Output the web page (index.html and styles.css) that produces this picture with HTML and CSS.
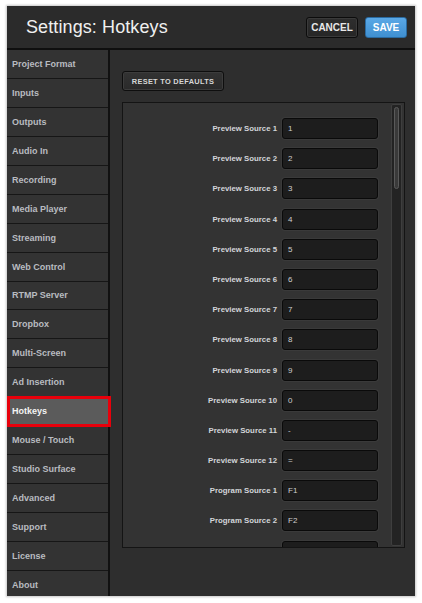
FILE: index.html
```html
<!DOCTYPE html>
<html>
<head>
<meta charset="utf-8">
<link rel="stylesheet" href="styles.css">
</head>
<body>
<div class="frame">
  <header class="header">
    <h1 class="title">Settings: Hotkeys</h1>
    <div class="actions">
      <button class="btn btn-cancel">CANCEL</button>
      <button class="btn btn-save">SAVE</button>
    </div>
  </header>
  <div class="main">
    <nav class="sidebar">
      <div class="nav-item">Project Format</div>
      <div class="nav-item">Inputs</div>
      <div class="nav-item">Outputs</div>
      <div class="nav-item">Audio In</div>
      <div class="nav-item">Recording</div>
      <div class="nav-item">Media Player</div>
      <div class="nav-item">Streaming</div>
      <div class="nav-item">Web Control</div>
      <div class="nav-item">RTMP Server</div>
      <div class="nav-item">Dropbox</div>
      <div class="nav-item">Multi-Screen</div>
      <div class="nav-item">Ad Insertion</div>
      <div class="nav-item active">Hotkeys<span class="highlight"></span></div>
      <div class="nav-item">Mouse / Touch</div>
      <div class="nav-item">Studio Surface</div>
      <div class="nav-item">Advanced</div>
      <div class="nav-item">Support</div>
      <div class="nav-item">License</div>
      <div class="nav-item">About</div>
    </nav>
    <section class="content">
      <button class="btn btn-reset">RESET TO DEFAULTS</button>
      <div class="panel">
        <div class="rows">
          <div class="row"><span class="label">Preview Source 1</span><span class="field">1</span></div>
          <div class="row"><span class="label">Preview Source 2</span><span class="field">2</span></div>
          <div class="row"><span class="label">Preview Source 3</span><span class="field">3</span></div>
          <div class="row"><span class="label">Preview Source 4</span><span class="field">4</span></div>
          <div class="row"><span class="label">Preview Source 5</span><span class="field">5</span></div>
          <div class="row"><span class="label">Preview Source 6</span><span class="field">6</span></div>
          <div class="row"><span class="label">Preview Source 7</span><span class="field">7</span></div>
          <div class="row"><span class="label">Preview Source 8</span><span class="field">8</span></div>
          <div class="row"><span class="label">Preview Source 9</span><span class="field">9</span></div>
          <div class="row"><span class="label">Preview Source 10</span><span class="field">0</span></div>
          <div class="row"><span class="label">Preview Source 11</span><span class="field">-</span></div>
          <div class="row"><span class="label">Preview Source 12</span><span class="field">=</span></div>
          <div class="row"><span class="label">Program Source 1</span><span class="field">F1</span></div>
          <div class="row"><span class="label">Program Source 2</span><span class="field">F2</span></div>
          <div class="row"><span class="label"></span><span class="field"></span></div>
        </div>
        <div class="scrollbar"><div class="thumb"></div></div>
      </div>
    </section>
  </div>
</div>
</body>
</html>
```

FILE: styles.css
```css
* { box-sizing: border-box; }
html, body { margin: 0; padding: 0; background: #ffffff; }
body { width: 422px; height: 603px; overflow: hidden; font-family: "Liberation Sans", Arial, sans-serif; }

.frame {
  margin: 6px 0 0 7px;
  width: 408px;
  height: 590px;
  background: #2e2e2e;
  box-shadow: 0 0 2px 1px #c8c8c8;
  display: flex;
  flex-direction: column;
  overflow: hidden;
}

.header {
  height: 44px;
  flex: none;
  background: #2b2b2b;
  border-bottom: 2px solid #0f0f0f;
  display: flex;
  align-items: center;
  justify-content: space-between;
  padding: 0 8px 0 19px;
}
.title {
  margin: 0;
  font-weight: normal;
  font-size: 18px;
  color: #f0f0f0;
  letter-spacing: 0.1px;
}
.actions { display: flex; gap: 7px; }

.btn {
  font-family: "Liberation Sans", Arial, sans-serif;
  font-weight: bold;
  font-size: 10px;
  border-radius: 3px;
  padding: 0;
  cursor: pointer;
}
.btn-cancel {
  width: 52px; height: 21px;
  background: linear-gradient(#2e2e2e, #262626);
  color: #e8e8e8;
  border: 1px solid #0c0c0c;
  box-shadow: inset 0 0 0 1px #3a3a3a;
}
.btn-save {
  width: 42px; height: 21px;
  background: linear-gradient(#5aa8e6, #3f8fd0);
  color: #ffffff;
  border: 1px solid #2a6aa0;
}

.main { flex: 1; display: flex; min-height: 0; }

.sidebar {
  width: 103px;
  flex: none;
  background: #333333;
  border-right: 2px solid #111111;
  display: flex;
  flex-direction: column;
}
.nav-item {
  position: relative;
  height: 28.95px;
  flex: none;
  border-bottom: 1px solid #161616;
  display: flex;
  align-items: center;
  padding-left: 5px;
  font-weight: bold;
  font-size: 9px;
  color: #b9bcc0;
}
.nav-item.active {
  background: #5b5b5b;
  color: #f4f4f4;
}
.highlight {
  position: absolute;
  left: 0; top: -1px; right: -3px; bottom: -2px;
  border: 3px solid #e8000b;
  pointer-events: none;
}

.content {
  flex: 1;
  display: flex;
  flex-direction: column;
  padding: 21px 10px 0 12px;
  background: #2e2e2e;
}
.btn-reset {
  align-self: flex-start;
  width: 102px; height: 20px;
  background: linear-gradient(#333333, #2a2a2a);
  color: #d6d6d6;
  border: 1px solid #0e0e0e;
  box-shadow: inset 0 0 0 1px #3c3c3c;
  font-size: 7.4px;
  letter-spacing: 0.3px;
}

.panel {
  margin-top: 11px;
  height: 446px;
  background: #333333;
  border: 1px solid #141414;
  display: flex;
  overflow: hidden;
}
.rows {
  flex: 1;
  padding-top: 15px;
  display: flex;
  flex-direction: column;
}
.row {
  height: 30.2px;
  flex: none;
  display: grid;
  grid-template-columns: 154px 96px;
  column-gap: 5px;
  align-items: start;
}
.label {
  text-align: right;
  font-weight: bold;
  font-size: 7.8px;
  color: #d4d6da;
  line-height: 21px;
}
.field {
  height: 21px;
  background: #1d1d1d;
  border: 1px solid #0a0a0a;
  border-radius: 3px;
  box-shadow: 0 0 0 1px #3a3a3a;
  font-size: 8px;
  color: #cfcfcf;
  line-height: 19px;
  padding-left: 5px;
}

.scrollbar {
  width: 11px;
  flex: none;
  margin: 1px 2px 1px 0;
  background: #232323;
  border: 1px solid #3e3e3e;
  border-radius: 2px;
  padding: 2px 2px;
}
.thumb {
  height: 82px;
  background: #3a3a3a;
  border: 1px solid #5a5a5a;
  border-radius: 3px;
}
```
